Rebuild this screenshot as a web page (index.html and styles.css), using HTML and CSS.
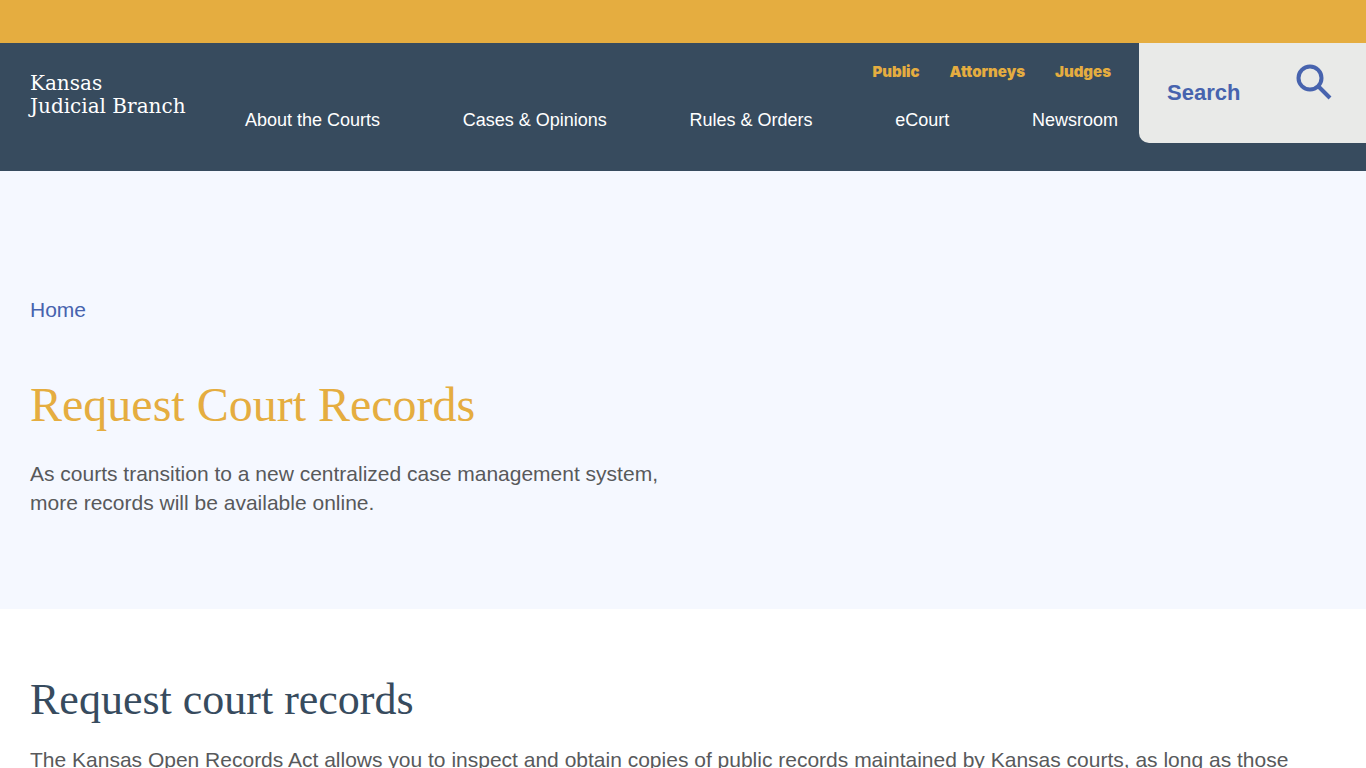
FILE: index.html
```
<!DOCTYPE html>
<html lang="en">
<head>
  <meta charset="UTF-8">
  <meta name="viewport" content="width=device-width, initial-scale=1">
  <title>Request Court Records - Kansas Judicial Branch</title>
  <link rel="stylesheet" href="styles.css">
</head>
<body>

  <div class="top-bar"></div>

  <!-- ===== Header with Nav ===== -->
  <header class="site-header">
    <a class="logo" href="#">Kansas<br>Judicial Branch</a>
    <div class="menus">
      <nav class="audience-nav" aria-label="Audience">
        <a href="#">Public</a>
        <a href="#">Attorneys</a>
        <a href="#">Judges</a>
      </nav>
      <nav class="main-nav" aria-label="Main">
        <a href="#">About the Courts</a>
        <a href="#">Cases &amp; Opinions</a>
        <a href="#">Rules &amp; Orders</a>
        <a href="#">eCourt</a>
        <a href="#">Newsroom</a>
      </nav>
    </div>
    <button class="search" type="button">
      <span>Search</span>
      <svg class="search-icon" viewBox="0 0 36 36" aria-hidden="true">
        <circle cx="14" cy="14" r="11.5"/>
        <path d="M22.5 22.5 L34 34"/>
      </svg>
    </button>
  </header>

  <main>
    <!-- ===== Hero Section ===== -->
    <section class="hero">
      <a class="breadcrumb" href="#">Home</a>
      <h1>Request Court Records</h1>
      <p>As courts transition to a new centralized case management system, more records will be available online.</p>
    </section>

    <!-- ===== Page Content ===== -->
    <section class="content">
      <h2>Request court records</h2>
      <p>The Kansas Open Records Act allows you to inspect and obtain copies of public records maintained by Kansas courts, as long as those</p>
    </section>
  </main>

</body>
</html>
```
FILE: styles.css
```
/* ===== Basic Reset & Styles ===== */
* {
  box-sizing: border-box;
}
body {
  margin: 0;
  font-family: "Liberation Sans", Arial, sans-serif;
  font-size: 21px;
  line-height: 29px;
  background: #fff;
  color: #58595b;
}
a {
  text-decoration: none;
}
h1, h2 {
  font-family: "Liberation Serif", "Times New Roman", serif;
  font-weight: normal;
  margin: 0;
}
p {
  margin: 0;
}
.top-bar {
  height: 43px;
  background: #e5ad40;
}

/* ===== Header ===== */
.site-header {
  display: flex;
  align-items: flex-start;
  min-height: 128px;
  padding-left: 30px;
  background: #374b5e;
}
.logo {
  width: 160px;
  padding-top: 29px;
  color: #fff;
  font-family: "DejaVu Serif", serif;
  font-size: 20px;
  line-height: 23px;
  white-space: nowrap;
}
.menus {
  flex: 1;
  padding: 20px 21px 0 55px;
}
.audience-nav {
  display: flex;
  justify-content: flex-end;
  gap: 30px;
  padding-right: 7px;
}
.audience-nav a {
  color: #e5ad40;
  font-family: "Arial Black", Inter, sans-serif;
  font-size: 15px;
  font-weight: 900;
  line-height: 18px;
}
.main-nav {
  display: flex;
  justify-content: space-between;
  margin-top: 28px;
}
.main-nav a {
  color: #fff;
  font-size: 18px;
  line-height: 22px;
}

/* ===== Search ===== */
.search {
  display: flex;
  justify-content: space-between;
  width: 227px;
  height: 100px;
  padding: 21px 34px 0 28px;
  border: none;
  border-radius: 0 0 0 10px;
  background: #e9eae8;
  color: #4763ae;
  font: bold 22px/58px "Liberation Sans", Arial, sans-serif;
  cursor: pointer;
}
.search-icon {
  width: 36px;
  height: 36px;
  fill: none;
  stroke: currentColor;
  stroke-width: 4;
}

/* ===== Hero Section ===== */
.hero {
  padding: 124px 30px 92px;
  background: #f5f8ff;
}
.breadcrumb {
  display: block;
  color: #4763ae;
}
.hero h1 {
  margin: 52px 0 25px;
  color: #e5ad40;
  font-size: 48px;
  line-height: 58px;
}
.hero p {
  max-width: 650px;
}

/* ===== Page Content ===== */
.content {
  padding: 64px 30px;
}
.content h2 {
  margin-bottom: 19px;
  color: #374b5e;
  font-size: 44px;
  line-height: 53px;
}
```
